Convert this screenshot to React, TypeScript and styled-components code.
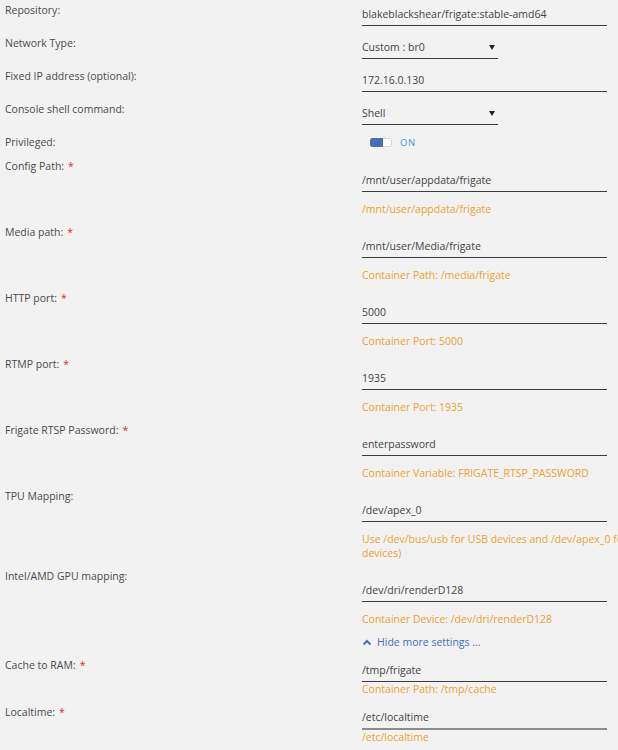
import React from 'react';
import styled, { createGlobalStyle } from 'styled-components';

const GlobalStyle = createGlobalStyle`
  html, body {
    margin: 0;
    padding: 0;
    background: #f2f2f2;
    overflow: hidden;
  }
  body {
    font-family: 'Open Sans', 'Noto Sans', sans-serif;
  }
`;

type Variant = 'inline' | 'spaced' | 'tight';

const fieldOffset: Record<Variant, number> = { inline: 0, spaced: 10, tight: 1 };
const noteOffset: Record<Variant, number> = { inline: 0, spaced: 10, tight: 0 };

const Form = styled.div`
  width: 660px;
  display: flex;
  flex-direction: column;
  color: #4a4a4a;
  font-size: 10.5px;
`;

const Row = styled.div<{ $after: number }>`
  display: grid;
  grid-template-columns: 357px 1fr;
  padding-left: 5px;
  margin-bottom: ${(p) => p.$after}px;
`;

const Label = styled.div`
  line-height: 20px;
  white-space: nowrap;
`;

const Required = styled.span`
  color: #e22828;
  margin-left: 4px;
`;

const Field = styled.div<{ $variant: Variant }>`
  padding-top: ${(p) => fieldOffset[p.$variant]}px;
  display: flex;
  flex-direction: column;
  align-items: flex-start;
`;

const Input = styled.div<{ $narrow?: boolean; $muted?: boolean }>`
  box-sizing: border-box;
  width: ${(p) => (p.$narrow ? 136 : 245)}px;
  padding-top: 4px;
  padding-bottom: 1px;
  line-height: 20px;
  border-bottom: ${(p) => (p.$muted ? '2px solid #8c8c8c' : '1px solid #3c3c3c')};
  display: flex;
  justify-content: space-between;
  align-items: center;
  color: #444;
  white-space: nowrap;
`;

const Arrow = styled.svg`
  margin-right: 3px;
`;

// the TPU note runs past the right edge, like the original page
const Note = styled.div<{ $variant: Variant }>`
  margin-top: ${(p) => noteOffset[p.$variant]}px;
  color: #f0a030;
  line-height: 14px;
  width: 290px;
`;

const ToggleWrap = styled.div`
  display: flex;
  align-items: center;
  gap: 8px;
  height: 20px;
  padding-left: 8px;
`;

const Toggle = styled.div`
  width: 22px;
  height: 9px;
  border-radius: 2px;
  background: #fff;
  box-shadow: inset 0 0 0 1px #d8d8d8;
  display: flex;
  overflow: hidden;
`;

const ToggleFill = styled.div`
  width: 13px;
  background: #486dba;
  border-radius: 2px 0 0 2px;
`;

const OnText = styled.span`
  color: #3a9ad9;
  font-size: 9.5px;
  letter-spacing: 0.5px;
`;

const MoreRow = styled.div`
  padding-left: 362px;
  margin-bottom: 3px;
  height: 20px;
  display: flex;
  align-items: center;
  gap: 5px;
  color: #486dba;
  font-size: 10.5px;
`;

const SelectArrow = () => (
  <Arrow width="6" height="5" viewBox="0 0 6 5">
    <path d="M0 0h6L3 5z" fill="#222" />
  </Arrow>
);

type Item = {
  label: string;
  value: string;
  note?: string;
  required?: boolean;
  variant: Variant;
  after: number;
  muted?: boolean;
};

const pathRows: Item[] = [
  { label: 'Config Path:', value: '/mnt/user/appdata/frigate', note: '/mnt/user/appdata/frigate', required: true, variant: 'spaced', after: 6 },
  { label: 'Media path:', value: '/mnt/user/Media/frigate', note: 'Container Path: /media/frigate', required: true, variant: 'spaced', after: 6 },
  { label: 'HTTP port:', value: '5000', note: 'Container Port: 5000', required: true, variant: 'spaced', after: 6 },
  { label: 'RTMP port:', value: '1935', note: 'Container Port: 1935', required: true, variant: 'spaced', after: 6 },
  { label: 'Frigate RTSP Password:', value: 'enterpassword', note: 'Container Variable: FRIGATE_RTSP_PASSWORD', required: true, variant: 'spaced', after: 6 },
  { label: 'TPU Mapping:', value: '/dev/apex_0', note: 'Use /dev/bus/usb for USB devices and /dev/apex_0 for PCIe devices)', variant: 'spaced', after: 6 },
  { label: 'Intel/AMD GPU mapping:', value: '/dev/dri/renderD128', note: 'Container Device: /dev/dri/renderD128', variant: 'spaced', after: 6 },
];

const extraRows: Item[] = [
  { label: 'Cache to RAM:', value: '/tmp/frigate', note: 'Container Path: /tmp/cache', required: true, variant: 'tight', after: 6 },
  { label: 'Localtime:', value: '/etc/localtime', note: '/etc/localtime', required: true, variant: 'tight', after: 6, muted: true },
];

const FieldRow: React.FC<{ item: Item }> = ({ item }) => (
  <Row $after={item.after}>
    <Label>
      {item.label}
      {item.required && <Required>*</Required>}
    </Label>
    <Field $variant={item.variant}>
      <Input $muted={item.muted}>{item.value}</Input>
      {item.note && <Note $variant={item.variant}>{item.note}</Note>}
    </Field>
  </Row>
);

const App: React.FC = () => {
  return (
    <>
      <GlobalStyle />
      <Form>
        <Row $after={7}>
          <Label>Repository:</Label>
          <Field $variant="inline">
            <Input>blakeblackshear/frigate:stable-amd64</Input>
          </Field>
        </Row>
        <Row $after={7}>
          <Label>Network Type:</Label>
          <Field $variant="inline">
            <Input $narrow>
              Custom : br0
              <SelectArrow />
            </Input>
          </Field>
        </Row>
        <Row $after={7}>
          <Label>Fixed IP address (optional):</Label>
          <Field $variant="inline">
            <Input>172.16.0.130</Input>
          </Field>
        </Row>
        <Row $after={7}>
          <Label>Console shell command:</Label>
          <Field $variant="inline">
            <Input $narrow>
              Shell
              <SelectArrow />
            </Input>
          </Field>
        </Row>
        <Row $after={4}>
          <Label>Privileged:</Label>
          <ToggleWrap>
            <Toggle>
              <ToggleFill />
            </Toggle>
            <OnText>ON</OnText>
          </ToggleWrap>
        </Row>
        {pathRows.map((item) => (
          <FieldRow key={item.label} item={item} />
        ))}
        <MoreRow>
          <svg width="10" height="7" viewBox="0 0 10 7">
            <path d="M1.5 5.5L5 2l3.5 3.5" fill="none" stroke="#486dba" strokeWidth="2" />
          </svg>
          Hide more settings ...
        </MoreRow>
        {extraRows.map((item) => (
          <FieldRow key={item.label} item={item} />
        ))}
      </Form>
    </>
  );
};

export default App;
